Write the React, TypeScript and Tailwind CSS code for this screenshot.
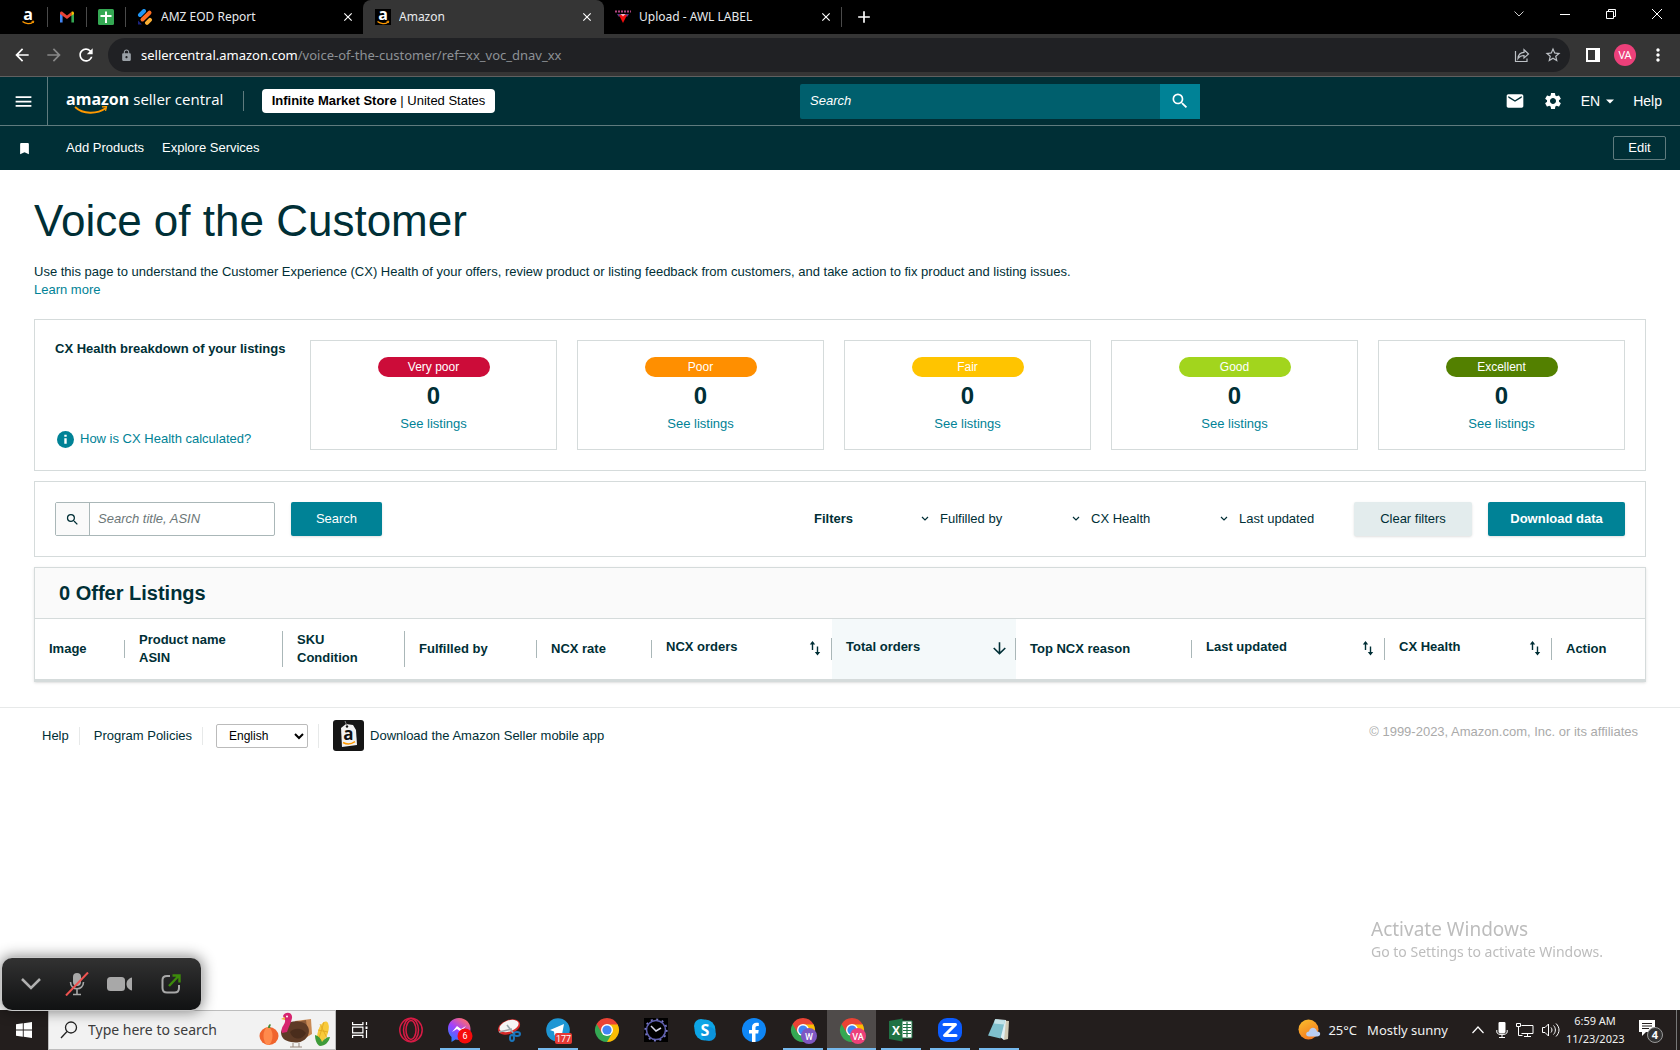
import React from "react";
import {
  MdAdd,
  MdArrowBack,
  MdArrowDownward,
  MdArrowForward,
  MdBookmark,
  MdClose,
  MdEmail,
  MdLock,
  MdMenu,
  MdMoreVert,
  MdRefresh,
  MdSearch,
  MdSettings,
  MdStarBorder,
} from "react-icons/md";

const ratings = [
  { label: "Very poor", color: "bg-[#cc0c39]" },
  { label: "Poor", color: "bg-[#ff8f00]" },
  { label: "Fair", color: "bg-[#ffc400]" },
  { label: "Good", color: "bg-[#a2d51d]" },
  { label: "Excellent", color: "bg-[#538000]" },
];

const columns = [
  { lines: ["Image"], width: "w-[90px]" },
  { lines: ["Product name", "ASIN"], width: "w-[158px]" },
  { lines: ["SKU", "Condition"], width: "w-[122px]" },
  { lines: ["Fulfilled by"], width: "w-[132px]" },
  { lines: ["NCX rate"], width: "w-[115px]" },
  { lines: ["NCX orders"], width: "w-[180px]", sort: "both" },
  { lines: ["Total orders"], width: "w-[184px]", sort: "down" },
  { lines: ["Top NCX reason"], width: "w-[176px]" },
  { lines: ["Last updated"], width: "w-[193px]", sort: "both" },
  { lines: ["CX Health"], width: "w-[167px]", sort: "both" },
  { lines: ["Action"], width: "w-[93px]" },
];

/* ---------- browser ---------- */

function AmazonFavicon() {
  return (
    <svg className="overflow-visible" width="16" height="16" viewBox="0 0 16 16">
      <rect width="16" height="16" fill="#000" />
      <text x="8" y="11" textAnchor="middle" fontSize="16" fontWeight="700" fontFamily="Open Sans, sans-serif" fill="#fff">a</text>
      <path d="M2.5 12.6c3 2.6 8 2.6 10.6.3" fill="none" stroke="#f90" strokeWidth="1.3" />
      <path d="M11.6 12.4l2.2-.3-.6 2" fill="none" stroke="#f90" strokeWidth="1" />
    </svg>
  );
}

function GmailIcon() {
  return (
    <svg width="16" height="12" viewBox="0 0 16 12">
      <path d="M1 2v9.500h2.600V4z" fill="#4285f4" />
      <path d="M12.400 4v7.500H15V2z" fill="#34a853" />
      <path d="M1 2.200C1 .6 2.600.1 3.600 1L8 4.400 12.400 1v3.600L8 8 1 2.900z" fill="#ea4335" />
      <path d="M12.400 1c1-.9 2.600-.4 2.600 1.200v.9l-2.600 1.700z" fill="#fbbc04" />
    </svg>
  );
}

function SheetsIcon() {
  return (
    <svg width="16" height="16" viewBox="0 0 16 16">
      <rect width="16" height="16" rx="1.500" fill="#34a853" />
      <path d="M7 2.500h2V6h4.500v2H9v6H7V8H2.500V6H7z" fill="#fff" />
    </svg>
  );
}

function ReportIcon() {
  return (
    <svg width="16" height="16" viewBox="0 0 16 16" strokeLinecap="round" strokeWidth="4">
      <path d="M3 6l4-4" stroke="#2196f3" />
      <path d="M5.500 10.500l7-6.800" stroke="#ff6d22" />
      <path d="M10 13.800l3-3" stroke="#fbb034" />
      <path d="M1 11.500v4h4z" fill="#1a237e" />
    </svg>
  );
}

function LabelIcon() {
  return (
    <svg width="16" height="16" viewBox="0 0 16 16">
      <path d="M0 2.500h16" stroke="#b0447f" strokeWidth="2" strokeDasharray="2 1" />
      <path d="M2 5h12l-1.500 2.500h-9z" fill="#5b3a86" />
      <path d="M4 6h8l-4 8z" fill="#f00d0d" />
      <path d="M5.500 5h5L8 7.500z" fill="#f5b7c0" />
    </svg>
  );
}

function Tab({ icon, title, active = false }: { icon: React.ReactNode; title: string; active?: boolean }) {
  return (
    <div className={active ? "flex w-[241px] items-center gap-2 rounded-t-lg bg-[#353535] pr-2.5 pl-3" : "flex w-[237px] items-center gap-2 pr-2 pl-[11px]"}>
      {icon}
      <span className="flex-1 truncate text-xs text-[#e8eaed]">{title}</span>
      <button type="button" aria-label={`Close ${title}`}>
        <MdClose size={14} />
      </button>
    </div>
  );
}

function BrowserBar() {
  return (
    <div className="font-['Noto_Sans',sans-serif] text-white">
      <div className="flex h-[34px] bg-black">
        <div className="flex items-center gap-[11px] pl-5">
          <AmazonFavicon />
          <span className="h-5 w-px bg-[#4a4a4a]" />
          <GmailIcon />
          <span className="h-5 w-px bg-[#4a4a4a]" />
          <SheetsIcon />
          <span className="h-5 w-px bg-[#4a4a4a]" />
        </div>
        <Tab icon={<ReportIcon />} title="AMZ EOD Report" />
        <Tab icon={<AmazonFavicon />} title="Amazon" active />
        <Tab icon={<LabelIcon />} title="Upload - AWL LABEL" />
        <div className="flex flex-1 items-center gap-3">
          <span className="h-5 w-px bg-[#4a4a4a]" />
          <button type="button" aria-label="New tab"><MdAdd size={20} /></button>
        </div>
        <div className="flex h-7 items-center">
          <button type="button" aria-label="Search tabs" className="flex w-[46px] justify-center">
            <svg width="10" height="6" viewBox="0 0 10 6" fill="none" stroke="#ccc"><path d="M.5.500l4.500 4.500 4.500-4.500" /></svg>
          </button>
          <button type="button" aria-label="Minimize" className="flex w-[46px] justify-center">
            <svg width="10" height="10" viewBox="0 0 10 10"><path d="M0 5.500h10" stroke="#fff" /></svg>
          </button>
          <button type="button" aria-label="Restore" className="flex w-[46px] justify-center">
            <svg width="10" height="10" viewBox="0 0 10 10" fill="none" stroke="#fff"><path d="M.5 2.500h7v7h-7zM2.500 2.500v-2h7v7h-2" /></svg>
          </button>
          <button type="button" aria-label="Close window" className="flex w-[46px] justify-center">
            <svg width="10" height="10" viewBox="0 0 10 10" stroke="#fff"><path d="M0 0l10 10M10 0L0 10" /></svg>
          </button>
        </div>
      </div>

      <div className="flex h-[43px] items-center border-b border-[#606060] bg-[#353535] px-3">
        <button type="button" aria-label="Back"><MdArrowBack size={20} /></button>
        <button type="button" aria-label="Forward" className="ml-3 text-[#888]"><MdArrowForward size={20} /></button>
        <button type="button" aria-label="Reload" className="ml-3"><MdRefresh size={20} /></button>
        <div className="ml-3 flex h-[34px] flex-1 items-center rounded-full bg-[#202124] pr-2 pl-3 text-[#bdc1c6]">
          <MdLock size={13} className="shrink-0 text-[#9aa0a6]" />
          <p className="ml-2 flex-1 text-[13px] text-[#8d9196]">
            <span className="text-white">sellercentral.amazon.com</span>/voice-of-the-customer/ref=xx_voc_dnav_xx
          </p>
          <button type="button" aria-label="Share">
            <svg width="16" height="16" viewBox="0 0 16 16" fill="none" stroke="currentColor" strokeWidth="1.200">
              <path d="M1.500 4v10.500h11.500v-3" />
              <path d="M4 11.500c.3-4 2.500-6 6-6.100V2.700L14.500 7 10 11V8.500c-2.800 0-4.500.8-6 3z" />
            </svg>
          </button>
          <button type="button" aria-label="Bookmark" className="ml-3.5"><MdStarBorder size={18} /></button>
        </div>
        <button type="button" aria-label="Side panel" className="ml-4">
          <svg width="14" height="14" viewBox="0 0 14 14"><path d="M1 1h12v12H1z" fill="none" stroke="#fff" strokeWidth="2" /><path d="M9 0h5v14H9z" fill="#fff" /></svg>
        </button>
        <button type="button" className="mr-3 ml-3.5 h-[22px] w-[22px] rounded-full bg-[#ec407a] text-[11px]">VA</button>
        <button type="button" aria-label="Menu"><MdMoreVert size={20} /></button>
      </div>
    </div>
  );
}

/* ---------- seller central ---------- */

function SellerHeader() {
  return (
    <header className="bg-[#002f36] text-[13px] text-white">
      <div className="flex h-[49px] items-center border-b border-[#5f7b7e]">
        <button type="button" aria-label="Open menu" className="flex h-12 w-12 items-center justify-center border-r border-[#5f7b7e]">
          <MdMenu size={21} />
        </button>
        <div className="flex flex-[752] items-center">
          <a href="#home" className="relative ml-[18px] flex w-40 items-baseline gap-1 pb-1 font-['Open_Sans',sans-serif] text-base leading-6 whitespace-nowrap">
            <span className="font-bold">amazon</span>
            <span className="text-[15px]">seller central</span>
            <svg className="absolute top-[19px] left-2" width="36" height="9" viewBox="0 0 36 9" fill="none" stroke="#f90">
              <path d="M1 1c8 7.500 22 7.500 31 1" strokeWidth="1.800" />
              <path d="M28 .8l4.500-.2-1 4.200" strokeWidth="1.300" />
            </svg>
          </a>
          <span className="ml-[17px] h-5 w-px bg-[#5f7b7e]" />
          <button type="button" className="ml-[18px] h-6 w-[233px] rounded-sm bg-white text-black">
            <b>Infinite Market Store</b> | United States
          </button>
        </div>
        <form className="flex h-[35px] w-[400px]" onSubmit={(e) => e.preventDefault()}>
          <input aria-label="Search Seller Central" placeholder="Search" className="min-w-0 flex-1 rounded-l-xs bg-[#005f6d] px-2.5 italic outline-none placeholder:text-white" />
          <button type="submit" aria-label="Search" className="flex w-10 items-center justify-center bg-[#008296]">
            <MdSearch size={20} />
          </button>
        </form>
        <div className="flex flex-[462] items-center justify-end pr-[18px] text-sm">
          <button type="button" aria-label="Mail"><MdEmail size={20} /></button>
          <button type="button" aria-label="Settings" className="ml-[18px]"><MdSettings size={20} /></button>
          <button type="button" className="ml-[18px] flex items-center gap-1.5">
            EN
            <svg width="8" height="5" viewBox="0 0 8 5"><path d="M0 .5h8L4 4.500z" fill="#fff" /></svg>
          </button>
          <a href="#help" className="ml-[19px]">Help</a>
        </div>
      </div>
      <nav className="flex h-11 items-center pr-3.5">
        <span className="flex w-12 justify-center"><MdBookmark size={15} /></span>
        <a href="#add" className="ml-[18px]">Add Products</a>
        <a href="#services" className="ml-[18px] flex-1">Explore Services</a>
        <button type="button" className="h-6 w-[53px] rounded-xs border border-[#5f7b7e]">Edit</button>
      </nav>
    </header>
  );
}

function Breakdown() {
  return (
    <section className="mt-5 flex border border-[#d5dbdb] p-5">
      <div className="flex w-[255px] shrink-0 flex-col justify-between">
        <h2 className="leading-[18px] font-bold">CX Health breakdown of your listings</h2>
        <a href="#cx" className="flex items-center gap-1.5 pb-0.5 pl-0.5 text-[#008296]">
          <svg width="17" height="17" viewBox="0 0 17 17">
            <circle cx="8.500" cy="8.500" r="8.500" fill="#008296" />
            <path d="M7.300 7.200h2.400v5.600H7.300zM7.300 3.800h2.400v2H7.300z" fill="#fff" />
          </svg>
          How is CX Health calculated?
        </a>
      </div>
      <div className="grid flex-1 grid-cols-5 gap-5">
        {ratings.map((r) => (
          <div key={r.label} className="flex h-[110px] flex-col items-center border border-[#d5dbdb] pt-4">
            <span className={`flex h-5 w-28 items-center justify-center rounded-full text-xs text-white ${r.color}`}>{r.label}</span>
            <span className="mt-1 text-2xl leading-[30px] font-bold">0</span>
            <a href="#listings" className="mt-1 text-[#008296]">See listings</a>
          </div>
        ))}
      </div>
    </section>
  );
}

function FilterButton({ label, width }: { label: string; width: string }) {
  return (
    <button type="button" className={`flex items-center gap-[11px] text-left ${width}`}>
      <svg width="8" height="6" viewBox="0 0 8 6" fill="none" stroke="#002f36" strokeWidth="1.200"><path d="M1 1l3 3 3-3" /></svg>
      {label}
    </button>
  );
}

function Filters() {
  return (
    <section className="mt-2.5 flex items-center border border-[#d5dbdb] p-5">
      <form className="flex flex-1" onSubmit={(e) => e.preventDefault()}>
        <div className="flex h-[34px] w-[220px] rounded-xs border border-[#aab7b8]">
          <label htmlFor="title-search" aria-label="Search title" className="flex w-[34px] items-center justify-center border-r border-[#aab7b8] bg-[#fafafa]">
            <MdSearch size={15} />
          </label>
          <input id="title-search" placeholder="Search title, ASIN" className="min-w-0 flex-1 px-2 italic outline-none placeholder:text-[#6c7778]" />
        </div>
        <button type="submit" className="ml-4 h-[34px] w-[91px] rounded-xs bg-[#008296] text-white shadow">Search</button>
      </form>
      <b className="w-[107px]">Filters</b>
      <FilterButton label="Fulfilled by" width="w-[151px]" />
      <FilterButton label="CX Health" width="w-[148px]" />
      <FilterButton label="Last updated" width="w-[134px]" />
      <button type="button" className="h-[34px] w-[118px] rounded-xs bg-[#e3eced] shadow">Clear filters</button>
      <button type="button" className="ml-4 h-[34px] w-[137px] rounded-xs bg-[#008296] font-bold text-white shadow">Download data</button>
    </section>
  );
}

function SortIcon() {
  return (
    <svg width="12" height="15" viewBox="0 0 12 15" fill="none" stroke="#002f36" strokeWidth="1.400">
      <path d="M3.500 9V1.500M8.500 5.500V13" />
      <path d="M3.500 0L.8 3.500h5.400zM8.500 14.500L5.800 11h5.400z" fill="#002f36" stroke="none" />
    </svg>
  );
}

function Listings() {
  return (
    <section className="mt-2.5 border border-b-[3px] border-[#d5dbdb] shadow">
      <h2 className="flex h-[51px] items-center border-b border-[#d5dbdb] bg-[#fafafa] px-6 text-xl font-bold">0 Offer Listings</h2>
      <table className="w-full table-fixed">
        <thead>
          <tr>
            {columns.map((col, i) => (
              <th
                key={col.lines[0]}
                className={`h-[60px] p-0 text-left align-middle leading-[18px] font-bold ${col.width} ${col.sort === "down" ? "bg-[#f4f9fa]" : ""}`}
              >
                <div className={`flex items-center justify-between pl-3.5 ${i < columns.length - 1 ? "border-r border-[#aab7b8]" : ""} ${col.sort ? "h-[22px]" : ""}`}>
                  <span className={col.sort ? "pb-1" : ""}>
                    {col.lines.map((line) => (
                      <span key={line} className="block">{line}</span>
                    ))}
                  </span>
                  {col.sort === "both" && <button type="button" aria-label="Sort" className="mr-2.5 pb-0.5"><SortIcon /></button>}
                  {col.sort === "down" && <button type="button" aria-label="Sort descending" className="mr-1.5 pb-0.5"><MdArrowDownward size={19} /></button>}
                </div>
              </th>
            ))}
          </tr>
        </thead>
      </table>
    </section>
  );
}

function Footer() {
  return (
    <footer className="mt-[25px] flex items-start justify-between border-t border-[#e7e9e9] px-[42px] pt-3">
      <div className="flex items-center">
        <a href="#help">Help</a>
        <span className="mr-3.5 ml-2.5 h-[18px] w-px bg-[#e7e9e9]" />
        <a href="#policies">Program Policies</a>
        <span className="mr-[13px] ml-2.5 h-[18px] w-px bg-[#e7e9e9]" />
        <select aria-label="Language" defaultValue="English" className="h-6 w-[92px] rounded-xs border border-[#bbb] bg-white px-2 text-xs text-black">
          <option>English</option>
        </select>
        <span className="mr-3.5 ml-2.5 h-6 w-px bg-[#e7e9e9]" />
        <a href="#app" className="flex items-center gap-1.5">
          <svg width="31" height="31" viewBox="0 0 31 31">
            <rect width="31" height="31" rx="3" fill="#151515" />
            <path d="M8 8l5-4 7 1 3 5 1 15-15 2z" fill="#f2f2f2" />
            <circle cx="14" cy="6.500" r="1.200" fill="#151515" />
            <path d="M14 6L12 1" stroke="#888" />
            <text x="15.500" y="20" textAnchor="middle" fontSize="17" fontWeight="700" fontFamily="Open Sans, sans-serif" fill="#111">a</text>
            <path d="M10 22.500c4 2.300 8 2 12-.8" fill="none" stroke="#f90" strokeWidth="1.500" />
          </svg>
          Download the Amazon Seller mobile app
        </a>
      </div>
      <p className="mt-[3px] text-[#aaa]">© 1999-2023, Amazon.com, Inc. or its affiliates</p>
    </footer>
  );
}

/* ---------- desktop overlays and taskbar ---------- */

function MeetingControls() {
  return (
    <div className="fixed bottom-10 left-0.5 flex h-[52px] w-[199px] items-center rounded-[10px] bg-linear-to-b from-[#323232] to-[#111213] pl-[18px] shadow-[0_0_0_1px_#c8c8c8,0_0_14px_2px_rgba(0,0,0,0.45)]">
      <button type="button" aria-label="Collapse">
        <svg width="22" height="14" viewBox="0 0 22 14" fill="none" stroke="#b0b0b0" strokeWidth="2.500"><path d="M2 2l9 9 9-9" /></svg>
      </button>
      <button type="button" aria-label="Unmute" className="ml-[23px]">
        <svg width="24" height="24" viewBox="0 0 24 24" fill="none" stroke="#a8a8a8" strokeWidth="1.600">
          <rect x="8" y="1" width="8" height="13" rx="4" fill="#a8a8a8" stroke="none" />
          <path d="M5.500 10c0 9 13 9 13 0M12 17v5M8 22.500h8" />
          <path d="M1 23.500L23 .5" stroke="#ef5350" strokeWidth="2" />
        </svg>
      </button>
      <button type="button" aria-label="Start video" className="ml-[18px]">
        <svg width="26" height="16" viewBox="0 0 26 16" fill="#a8a8a8"><rect y="1" width="18" height="14" rx="3.500" /><path d="M25 1.500v13c-3-.8-5.500-3-5.500-6.500S22 2.300 25 1.500z" /></svg>
      </button>
      <button type="button" aria-label="Share screen" className="ml-7">
        <svg width="20" height="20" viewBox="0 0 20 20" fill="none" strokeWidth="2">
          <path d="M9 2H6C3 2 1.500 3.500 1.500 6v8c0 3 1.500 4.500 4.500 4.500h7.500c3 0 4.500-1.500 4.500-4.500v-3" stroke="#a8a8a8" />
          <path d="M8 12L17.500 2M11.500 1.500h7v7" stroke="#3d8b0b" strokeWidth="2.400" />
        </svg>
      </button>
    </div>
  );
}

function HarvestArt() {
  return (
    <svg width="72" height="36" viewBox="0 0 72 36">
      <ellipse cx="10" cy="24" rx="9.500" ry="9" fill="#f0642d" />
      <ellipse cx="9" cy="24" rx="4.500" ry="9" fill="#ff8a4c" />
      <path d="M9 16c0-2 .5-3 2-4l1 1c-1 1-1 2-.5 3z" fill="#4c8a34" />
      <path d="M36 9l16-2 1 15-10 6z" fill="#c98a55" />
      <path d="M37 10l10-2 2 16-8 3z" fill="#8b5a38" />
      <path d="M22 20c3-10 13-13 23-9 6 3 6 10 3 14-4 6-11 6-16 5-6-1-10-4-10-10z" fill="#5e3b26" />
      <path d="M31 20c5-5 12-4 16 1-3 7-13 8-16-1z" fill="#4a2d1c" />
      <path d="M24 4c2-5 10-4 9 2-1 5-3 8-5 14l-5 1c-2-6 4-9 3-13z" fill="#d6256f" />
      <path d="M26 5l-4 2 4 1z" fill="#f2b33d" />
      <circle cx="28" cy="4.500" r="1" fill="#fff" />
      <path d="M34 31v4M40 31v4M31 35h12" stroke="#9a8a80" />
      <ellipse cx="64" cy="20" rx="5" ry="11" transform="rotate(18 64 20)" fill="#f8ca3a" />
      <path d="M61 12l7 14M65 10l-5 16M59 18l10 2" stroke="#e0a51e" strokeWidth=".8" />
      <path d="M56 23c4 1 6 4 7 7 2-3 5-5 8-5-1 5-5 9-10 9-3-1-5-6-5-11z" fill="#3e9b3a" />
    </svg>
  );
}

function ChromeIcon({ badge, badgeColor }: { badge?: string; badgeColor?: string }) {
  return (
    <svg className="overflow-visible" width="24" height="24" viewBox="0 0 24 24">
      <path d="M12 12L1.600 6A12 12 0 0 1 22.400 6z" fill="#ea4335" />
      <path d="M12 12L1.600 6A12 12 0 0 0 12 24l4-8z" fill="#34a853" />
      <path d="M12 12L12 24A12 12 0 0 0 22.400 6H12z" fill="#fbbc04" />
      <path d="M1.600 6l5.200 9L12 6.500h10.600L22.400 6z" fill="#ea4335" />
      <path d="M17.200 15L12 24l-5-9z" fill="#34a853" />
      <circle cx="12" cy="12" r="6" fill="#fff" />
      <circle cx="12" cy="12" r="4.600" fill="#4285f4" />
      {badge && <circle cx="18" cy="18" r="8" fill={badgeColor} />}
      {badge && <text x="18" y="21.500" textAnchor="middle" fontSize="9" fill="#fff" fontFamily="Roboto, sans-serif" fontWeight="500">{badge}</text>}
    </svg>
  );
}

const apps = [
  {
    name: "Opera",
    icon: (
      <svg width="24" height="26" viewBox="0 0 24 26" fill="none" stroke="#d81b45" strokeWidth="1.500">
        <ellipse cx="12" cy="13" rx="11.200" ry="11.800" /><ellipse cx="12" cy="13" rx="7.500" ry="11.500" /><ellipse cx="12" cy="13" rx="5" ry="9.500" />
      </svg>
    ),
  },
  {
    name: "Messenger",
    open: true,
    icon: (
      <svg width="26" height="28" viewBox="0 0 26 28">
        <defs>
          <linearGradient id="msg" x1="0" y1="1" x2="0.700" y2="0"><stop offset="0" stopColor="#0a8cff" /><stop offset=".55" stopColor="#a040ff" /><stop offset="1" stopColor="#ff6a70" /></linearGradient>
        </defs>
        <path d="M12 2C5 2 1 7 1 13c0 3.500 1.500 6 3.500 8v5l4-2.500c8 2 15-3 15-10.500C23.500 7 19 2 12 2z" fill="url(#msg)" />
        <path d="M5 16l5-6 4 3 5-3-5 6-4-3z" fill="#fff" />
        <circle cx="18" cy="20" r="7.500" fill="#f60b0b" />
        <text x="18" y="23" textAnchor="middle" fontSize="9" fill="#fff" fontFamily="Roboto, sans-serif">6</text>
      </svg>
    ),
  },
  {
    name: "Snipping Tool",
    icon: (
      <svg width="26" height="24" viewBox="0 0 26 24">
        <ellipse cx="13" cy="9" rx="11.500" ry="7" transform="rotate(-20 13 9)" fill="#d62a2a" />
        <ellipse cx="13" cy="8" rx="10" ry="5.500" transform="rotate(-20 13 8)" fill="#f5f5f5" />
        <path d="M3 14l13-3M11 7l7 9" stroke="#9aa5ab" strokeWidth="1.600" />
        <g fill="none" stroke="#1b76bd" strokeWidth="2"><ellipse cx="16" cy="20" rx="2" ry="3" /><ellipse cx="21" cy="16" rx="3" ry="2" /></g>
      </svg>
    ),
  },
  {
    name: "Telegram",
    open: true,
    icon: (
      <svg className="overflow-visible" width="24" height="24" viewBox="0 0 24 24">
        <circle cx="12" cy="12" r="11.800" fill="#1e96d4" />
        <path d="M4 12l14-6-2.500 13-4.500-3.500-2.500 2-.5-4z" fill="#fff" />
        <rect x="9" y="15" width="17" height="11" rx="2" fill="#e53935" />
        <text x="17.500" y="24" textAnchor="middle" fontSize="9" fill="#fff" fontFamily="Roboto, sans-serif">177</text>
      </svg>
    ),
  },
  { name: "Chrome", icon: <ChromeIcon /> },
  {
    name: "Time Tracker",
    icon: (
      <svg width="24" height="24" viewBox="0 0 24 24" fill="none">
        <rect width="24" height="24" fill="#000" />
        <circle cx="12" cy="12" r="9.500" stroke="#5f5fae" strokeWidth="1.600" />
        <circle cx="12" cy="12" r="10.800" stroke="#7a7ac8" strokeWidth="1.600" strokeDasharray="2 3.650" />
        <path d="M7 8l5 5 5-3" stroke="#d8d8ea" strokeWidth="1.500" />
      </svg>
    ),
  },
  {
    name: "Skype",
    icon: (
      <svg width="24" height="24" viewBox="0 0 24 24">
        <circle cx="12" cy="12" r="10.500" fill="#0da5e6" /><circle cx="8" cy="8" r="7" fill="#0da5e6" /><circle cx="16" cy="16" r="7" fill="#0b93dc" />
        <text x="12" y="17.500" textAnchor="middle" fontSize="16" fontWeight="700" fill="#fff" fontFamily="Open Sans, sans-serif">S</text>
      </svg>
    ),
  },
  {
    name: "Facebook",
    icon: (
      <svg width="24" height="24" viewBox="0 0 24 24">
        <circle cx="12" cy="12" r="12" fill="#0f86f5" />
        <path d="M10 24v-8.500H7V12h3V9.300C10 6.300 11.800 4.700 14.500 4.700c1.300 0 2.300.2 2.300.2v3h-1.500c-1.400 0-1.800.9-1.800 1.800V12h3.200l-.5 3.500h-2.700V24z" fill="#fff" />
      </svg>
    ),
  },
  { name: "Chrome W", open: true, icon: <ChromeIcon badge="W" badgeColor="#7e57c2" /> },
  { name: "Chrome VA", open: true, active: true, icon: <ChromeIcon badge="VA" badgeColor="#ec407a" /> },
  {
    name: "Excel",
    open: true,
    icon: (
      <svg width="24" height="24" viewBox="0 0 24 24">
        <path d="M12 3h11v17H12z" fill="#fff" stroke="#1f7244" />
        <path d="M14 6.500h8M14 9.500h8M14 12.500h8M14 15.500h8M18 4v15" stroke="#1f7244" strokeWidth="1.200" />
        <path d="M0 3l13.500-2.500v23L0 21z" fill="#1f7244" />
        <text x="7" y="16.500" textAnchor="middle" fontSize="12" fontWeight="700" fill="#fff" fontFamily="Open Sans, sans-serif">X</text>
      </svg>
    ),
  },
  {
    name: "Zoom",
    open: true,
    icon: (
      <svg width="24" height="24" viewBox="0 0 24 24">
        <rect width="24" height="24" rx="9" fill="#0b5cff" />
        <path d="M6 6.500h11.500L6.500 17.500H18" fill="none" stroke="#fff" strokeWidth="3" strokeLinejoin="round" strokeLinecap="round" />
      </svg>
    ),
  },
  {
    name: "Notepad",
    open: true,
    icon: (
      <svg width="24" height="24" viewBox="0 0 24 24">
        <path d="M10 2l12 1-1 18-4 1z" fill="#cfc9b4" />
        <path d="M8 1l11 1-2 20-4-3z" fill="#dfeff2" />
        <path d="M8 1.500l10 1-4.500 18L1 17.500z" fill="#7fc0cd" />
        <path d="M8 1.500l10 1-1 4-10-1z" fill="#c4e3e8" />
      </svg>
    ),
  },
];

function Taskbar() {
  return (
    <div className="flex h-10 items-stretch bg-[#231e1d] font-['Noto_Sans',sans-serif] text-white">
      <button type="button" aria-label="Start" className="flex w-12 items-center justify-center">
        <svg width="16" height="16" viewBox="0 0 16 16" fill="#fff"><path d="M0 2.300l6.800-1v6.200H0zM7.700 1.200L16 0v7.500H7.700zM0 8.400h6.800v6.300L0 13.700zM7.700 8.400H16V16l-8.300-1.200z" /></svg>
      </button>
      <label className="flex w-[288px] items-center border border-[#bdbdbd] bg-[#f2f2f2] pr-1 pl-[11px]">
        <svg width="18" height="18" viewBox="0 0 18 18" fill="none" stroke="#222" strokeWidth="1.300"><circle cx="11" cy="6.500" r="5.500" /><path d="M7 10.500L1 17" /></svg>
        <input placeholder="Type here to search" className="ml-2.5 min-w-0 flex-1 text-sm outline-none placeholder:text-[#3c3c3c]" />
        <HarvestArt />
      </label>
      <button type="button" aria-label="Task view" className="flex w-12 items-center justify-center">
        <svg width="16" height="16" viewBox="0 0 16 16" fill="none" stroke="#fff" strokeWidth="1.200">
          <path d="M.6 0v2.600h10.300V0M.6 5.100h10.300v5.800H.6zM.6 16v-2.600h10.300V16M14.500 0v3M14.500 8v8" /><path d="M13.500 4.500h2v2.500h-2z" fill="#fff" stroke="none" />
        </svg>
      </button>
      <div className="flex flex-1 pl-0.5">
        {apps.map((app) => (
          <button key={app.name} type="button" aria-label={app.name} className={`flex w-[49px] flex-col items-center ${app.active ? "bg-[#4f4b4a]" : ""}`}>
            <span className="flex h-[38px] items-center pt-0.5">{app.icon}</span>
            {app.open && <span className={app.active ? "h-0.5 w-full bg-[#76b9ed]" : "h-0.5 w-10 bg-[#76b9ed]"} />}
          </button>
        ))}
      </div>
      <div className="flex items-center text-[#f0f0f0]">
        <svg width="24" height="22" viewBox="0 0 24 22">
          <defs><linearGradient id="sun" x1="0" y1="0" x2="0.500" y2="1"><stop offset="0" stopColor="#fbc02d" /><stop offset="1" stopColor="#f47b20" /></linearGradient></defs>
          <circle cx="10.500" cy="10.500" r="10" fill="url(#sun)" />
          <path d="M11 17.500c-4 0-3.500-5 0-5 1-5 7-5 8 0 4.500 0 4 5 0 5z" fill="#b9cdf3" />
        </svg>
        <span className="ml-1.5 text-[13px]">25°C</span>
        <span className="ml-2.5 text-[13px]">Mostly sunny</span>
        <svg className="ml-6" width="12" height="8" viewBox="0 0 12 8" fill="none" stroke="#fff" strokeWidth="1.200"><path d="M.5 7L6 1l5.500 6" /></svg>
        <svg className="ml-3" width="12" height="16" viewBox="0 0 12 16" fill="none" stroke="#fff"><rect x="3" y="0" width="6" height="11" rx="1" fill="#fff" /><path d="M.8 8v2c0 3.500 10.400 3.500 10.400 0V8M6 13v2.500M3 15.500h6" /></svg>
        <svg className="ml-2" width="18" height="16" viewBox="0 0 18 16" fill="none" stroke="#fff"><path d="M5.500 3.500h11.500v8H5.500M8 14.500h7M11.500 11.500v3M.5 1.500h4v3h-4zM2.500 4.500v9h4" /></svg>
        <svg className="ml-2" width="18" height="16" viewBox="0 0 18 16" fill="none" stroke="#fff"><path d="M.5 5.500h2.500L6.500 2v12L3 10.500H.5zM9 5.500c1.300 1.500 1.300 3.500 0 5M11.500 3.500c2.500 2.500 2.500 6.500 0 9M14 1.500c4 4 4 9 0 13" /></svg>
        <div className="ml-1.5 w-[58px] text-center text-[11px] leading-[18px] whitespace-nowrap">
          <div>6:59 AM</div>
          <div>11/23/2023</div>
        </div>
        <svg className="mr-[11px] ml-[15px]" width="26" height="26" viewBox="0 0 26 26">
          <path d="M0 3h16v12H7l-4 4v-4H0z" fill="#fff" />
          <path d="M3 6.500h10M3 9h10M3 11.500h7" stroke="#231e1d" />
          <circle cx="16" cy="18" r="7.500" fill="#333" stroke="#999" />
          <text x="16" y="22" textAnchor="middle" fontSize="11" fontWeight="700" fill="#fff" fontFamily="Noto Sans, sans-serif">4</text>
        </svg>
        <span className="mr-[3px] h-full w-px bg-[#777]" />
      </div>
    </div>
  );
}

export default function App() {
  return (
    <div className="flex min-h-screen flex-col bg-white font-['Liberation_Sans',Arial,sans-serif] text-[13px] leading-[18px] text-[#002f36]">
      <BrowserBar />
      <SellerHeader />
      <main className="px-[34px] pt-6">
        <h1 className="text-[44px] leading-[54px]">Voice of the Customer</h1>
        <p className="mt-[15px]">
          Use this page to understand the Customer Experience (CX) Health of your offers, review product or listing feedback from customers, and take action to fix product and listing issues.
        </p>
        <a href="#learn" className="block text-[#008296]">Learn more</a>
        <Breakdown />
        <Filters />
        <Listings />
      </main>
      <Footer />
      <div className="flex-1" />
      <div className="fixed right-[73px] bottom-[87px] w-[236px] font-['Noto_Sans',sans-serif] text-[#bdbdbd]">
        <p className="text-[19px] leading-6">Activate Windows</p>
        <p className="text-sm leading-[22px]">Go to Settings to activate Windows.</p>
      </div>
      <MeetingControls />
      <Taskbar />
    </div>
  );
}
